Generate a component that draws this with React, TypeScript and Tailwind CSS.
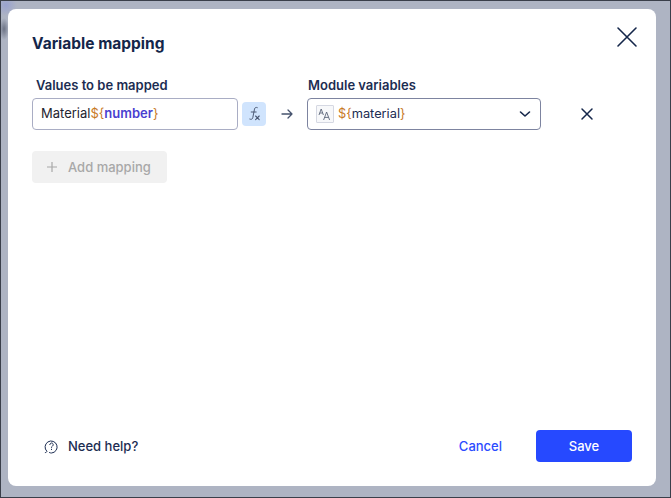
import React from "react";

const FONT = { fontFamily: "Inter, 'Liberation Sans', sans-serif" };

function Fx() {
  return (
    <svg width="18" height="18" viewBox="0 0 18 18" fill="none" stroke="#46536e" strokeWidth="0.95" strokeLinecap="round">
      <path d="M12.3 2.6c-1.4-.6-2.5 0-2.8 1.5L7.8 12.6c-.3 1.5-1.4 2.2-3 1.5" />
      <path d="M6.2 7h5" />
      <path d="M10.6 11l3.6 3.6M14.2 11l-3.6 3.6" strokeWidth="1.1" />
    </svg>
  );
}

export default function App() {
  return (
    <div
      className="w-[671px] h-[498px] border border-[#3a3f4a] bg-[#aeb4c3] bg-[radial-gradient(circle_at_5px_4px,#99a2cf_0,transparent_11px),radial-gradient(ellipse_5px_11px_at_3px_28px,#6c7385_0,transparent_100%)] pt-[8px] pl-[7px] pr-[14px] pb-[11px] overflow-hidden"
      style={FONT}
    >
      <div className="h-full w-full bg-white rounded-[8px] flex flex-col pl-[24px] pr-[24px]">
        <div className="flex items-start justify-between pt-[25px] h-[68px]">
          <h1 className="text-[15.5px] leading-[20px] font-bold text-[#14264a]">Variable mapping</h1>
          <button className="-mr-[6px] -mt-[8px] text-[#14264a]">
            <svg className="block" width="22" height="22" viewBox="0 0 22 22" fill="none" stroke="currentColor" strokeWidth="1.6" strokeLinecap="round">
              <path d="M2 2l18 18M20 2L2 20" />
            </svg>
          </button>
        </div>

        <div className="flex items-end">
          <div className="flex flex-col w-[206px]">
            <label className="pl-[4px] text-[13px] leading-[16px] font-semibold text-[#1c2d52] mb-[5px]">Values to be mapped</label>
            <div className="h-[32px] rounded-[4px] border border-[#a9adc4] flex items-center px-[8px] text-[13px]">
              <span className="text-[#1f2430]">Material</span>
              <span className="text-[#c8791f]">{"${"}</span>
              <span className="text-[#4a3fd0] font-semibold">number</span>
              <span className="text-[#c8791f]">{"}"}</span>
            </div>
          </div>
          <div className="ml-[4px] mb-[4px] w-[24px] h-[24px] rounded-[4px] bg-[#d0e4fd] flex items-center justify-center">
            <Fx />
          </div>
          <div className="w-[41px] mb-[4px] h-[24px] flex items-center justify-center text-[#46536e]">
            <svg width="12" height="12" viewBox="0 0 12 12" fill="none" stroke="currentColor" strokeWidth="1.3" strokeLinecap="round" strokeLinejoin="round">
              <path d="M1 6h10M7 2l4 4-4 4" />
            </svg>
          </div>
          <div className="flex flex-col w-[234px]">
            <label className="pl-[1px] text-[13px] leading-[16px] font-semibold text-[#1c2d52] mb-[5px]">Module variables</label>
            <div className="h-[32px] rounded-[4px] border border-[#7d84a0] flex items-center pl-[8px] pr-[9px] text-[12.8px]">
              <span className="w-[18px] h-[18px] border border-[#d5d8e2] bg-[#f7f8fa] rounded-[1px] flex items-center justify-center mr-[4px]">
                <svg width="14" height="14" viewBox="0 0 14 14" fill="none" stroke="#5a6478" strokeWidth="0.9" strokeLinejoin="round">
                  <path d="M1 8l2.2-6L5.4 8M1.8 6h2.8" />
                  <path d="M5.6 13l3-8 3 8M6.7 10.4h3.8" />
                </svg>
              </span>
              <span className="text-[#c8791f]">{"${"}</span>
              <span className="text-[#1c2d52]">material</span>
              <span className="text-[#c8791f]">{"}"}</span>
              <svg className="ml-auto" width="12" height="12" viewBox="0 0 12 12" fill="none" stroke="#14264a" strokeWidth="1.6" strokeLinecap="round" strokeLinejoin="round">
                <path d="M1.5 4l4.5 4 4.5-4" />
              </svg>
            </div>
          </div>
          <div className="ml-[39px] mb-[9px] text-[#14264a]">
            <svg className="block" width="14" height="14" viewBox="0 0 14 14" fill="none" stroke="currentColor" strokeWidth="1.5" strokeLinecap="round">
              <path d="M2 2l10 10M12 2L2 12" />
            </svg>
          </div>
        </div>

        <button className="mt-[21px] w-[135px] h-[32px] rounded-[4px] bg-[#f1f1f1] flex items-center pl-[15px] gap-[11px] text-[13px] font-medium text-[#a8a8a8]">
          <svg width="10" height="10" viewBox="0 0 10 10" fill="none" stroke="currentColor" strokeWidth="1.2">
            <path d="M5 0v10M0 5h10" />
          </svg>
          <span className="pt-[2px]">Add mapping</span>
        </button>

        <div className="flex-1" />

        <div className="flex items-center h-[32px] mb-[24px]">
          <div className="flex items-center pl-[12px] gap-[9px] text-[13px] font-medium text-[#1c2d52]">
            <svg width="15" height="15" viewBox="0 0 15 15" fill="none" stroke="currentColor" strokeWidth="1">
              <path d="M1.3 13.6c.9-.1 1.5-.6 1.6-1.3A6 6 0 1 1 7.5 14c-.7 0-1.4-.1-2-.4" strokeLinecap="round" />
              <path d="M5.8 5.6a1.7 1.7 0 1 1 2.6 1.5c-.6.4-.9.7-.9 1.3" strokeLinecap="round" />
              <path d="M7.5 10.2v.4" strokeLinecap="round" />
            </svg>
            <span className="pt-[2px]">Need help?</span>
          </div>
          <button className="ml-auto pt-[2px] text-[13px] font-medium text-[#2b4bff] mr-[34px]">Cancel</button>
          <button className="w-[96px] h-[32px] pt-[2px] rounded-[4px] bg-[#2649ff] text-white text-[13px] font-medium">Save</button>
        </div>
      </div>
    </div>
  );
}
